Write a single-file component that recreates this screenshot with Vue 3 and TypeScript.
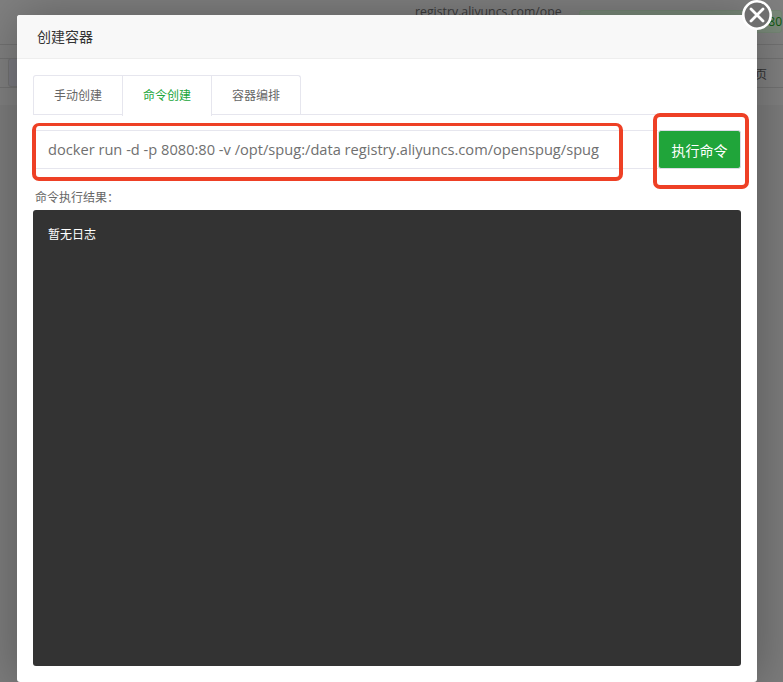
<script setup lang="ts">
const tabs: { label: string; active?: boolean }[] = [
  { label: '手动创建' },
  { label: '命令创建', active: true },
  { label: '容器编排' },
]
const command = 'docker run -d -p 8080:80 -v /opt/spug:/data registry.aliyuncs.com/openspug/spug'
</script>

<template>
  <div class="page">
    <div class="backdrop">
      <div class="bg-top">
        <span class="bg-url">registry.aliyuncs.com/ope</span>
        <span class="bg-bar"><span class="bg-pct">80</span></span>
      </div>
      <div class="bg-row">
        <span class="bg-box"></span>
        <span class="bg-page">页</span>
      </div>
    </div>

    <section class="modal">
      <header class="modal-head">创建容器</header>
      <div class="modal-body">
        <nav class="tabs">
          <span v-for="t in tabs" :key="t.label" class="tab" :class="{ active: t.active }">{{ t.label }}</span>
        </nav>
        <div class="cmd-row">
          <div class="cmd-wrap">
            <div class="cmd-input">{{ command }}</div>
          </div>
          <div class="btn-wrap">
            <button class="run" type="button">执行命令</button>
          </div>
        </div>
        <div class="result-label">命令执行结果：</div>
        <div class="log">暂无日志</div>
      </div>
      <button class="close" type="button" aria-label="关闭">
        <svg width="30" height="30" viewBox="0 0 30 30">
          <circle cx="15" cy="15" r="13.7" fill="#6f6f6f" stroke="#fff" stroke-width="2.6" />
          <path d="M9 9 21 21M21 9 9 21" stroke="#fff" stroke-width="2.8" stroke-linecap="round" />
        </svg>
      </button>
    </section>
  </div>
</template>

<style>
html, body { margin: 0; padding: 0; background: #7f7f7f; }
</style>

<style scoped>
.page {
  position: relative;
  width: 783px;
  height: 682px;
  overflow: hidden;
  background: #7c7c7c;
  font-family: "Open Sans", "Noto Sans CJK SC", sans-serif;
}
.backdrop {
  position: absolute;
  top: 0;
  left: 0;
  right: 0;
  height: 105px;
  background: #808080;
}
.bg-top {
  height: 44px;
  border-bottom: 1px solid #727272;
  position: relative;
  font-size: 12.3px;
  color: #3c3c3c;
}
.bg-url { position: absolute; left: 415px; top: 3px; }
.bg-bar {
  position: absolute;
  left: 579px;
  top: 10px;
  width: 203px;
  height: 23px;
  background: #7a8a7a;
  border: 1px solid #748674;
  box-sizing: border-box;
  border-radius: 3px;
}
.bg-pct { position: absolute; right: -1px; top: 2px; color: #0e5a0e; font-size: 12px; }
.bg-row {
  height: 46px;
  margin-top: 13px;
  border-top: 1px solid #727272;
  position: relative;
}
.bg-box {
  position: absolute;
  left: 8px;
  top: -1px;
  width: 40px;
  height: 27px;
  background: #7a7a80;
  border: 1px solid #727272;
  border-radius: 3px;
}
.bg-row::after {
  content: "";
  position: absolute;
  left: 0;
  right: 0;
  top: 28px;
  height: 1px;
  background: #727272;
}
.bg-page {
  position: absolute;
  right: 16px;
  top: 6px;
  font-size: 12px;
  color: #333;
}
.modal {
  position: absolute;
  left: 17px;
  top: 15px;
  width: 740px;
  height: 667px;
  background: #fff;
  border-radius: 3px;
  box-shadow: 1px 1px 50px rgba(0, 0, 0, 0.3);
}
.modal-head {
  height: 43px;
  line-height: 43px;
  padding-left: 20px;
  font-size: 14px;
  color: #333;
  background: #f8f8f8;
  border-bottom: 1px solid #eee;
  border-radius: 3px 3px 0 0;
}
.modal-body {
  padding: 16px 16px 0;
  display: flex;
  flex-direction: column;
}
.tabs {
  display: flex;
  height: 40px;
  border-bottom: 1px solid #e6e6ee;
  box-sizing: border-box;
}
.tab {
  width: 88px;
  height: 39px;
  line-height: 39px;
  text-align: center;
  font-size: 12px;
  color: #666;
  border: 1px solid #e6e6ee;
  border-bottom: none;
  margin-right: -1px;
}
.tab:first-child { border-radius: 3px 0 0 0; }
.tab:last-child { border-radius: 0 3px 0 0; }
.tab.active {
  color: #20a53a;
  background: #fff;
  height: 40px;
  position: relative;
}
.cmd-row {
  display: flex;
  justify-content: space-between;
  margin-top: 15px;
  height: 39px;
}
.cmd-wrap {
  flex: 1;
  position: relative;
  border-top: 1px solid #e6e6ee;
  border-bottom: 1px solid #e6e6ee;
}
.cmd-wrap::after {
  content: "";
  position: absolute;
  left: -1px;
  top: -8px;
  width: 591px;
  height: 58px;
  border: 4px solid #ee4025;
  border-top-width: 3px;
  border-radius: 7px;
  box-sizing: border-box;
  pointer-events: none;
}
.cmd-input {
  height: 37px;
  line-height: 37px;
  padding-left: 15px;
  font-size: 14.63px;
  color: #707070;
  white-space: nowrap;
}
.btn-wrap { position: relative; }
.btn-wrap::after {
  content: "";
  position: absolute;
  left: -5px;
  top: -17px;
  width: 96px;
  height: 76px;
  border: 4px solid #ee4025;
  border-radius: 7px;
  box-sizing: border-box;
  pointer-events: none;
}
.run {
  display: block;
  width: 83px;
  height: 39px;
  padding: 0;
  border: 1px solid #dcdce6;
  border-radius: 3px;
  background: #20a53a;
  color: #fff;
  font-size: 14px;
  font-family: inherit;
}
.result-label {
  margin-top: 20px;
  padding-left: 2px;
  height: 21px;
  line-height: 17px;
  font-size: 12px;
  color: #666;
}
.log {
  height: 456px;
  padding: 16px 15px;
  box-sizing: border-box;
  background: #333;
  border-radius: 3px;
  color: #fff;
  font-size: 12px;
  line-height: 17px;
}
.close {
  position: absolute;
  right: -15px;
  top: -15px;
  width: 30px;
  height: 30px;
  padding: 0;
  background: none;
  border: none;
}
.close svg { display: block; }
</style>
